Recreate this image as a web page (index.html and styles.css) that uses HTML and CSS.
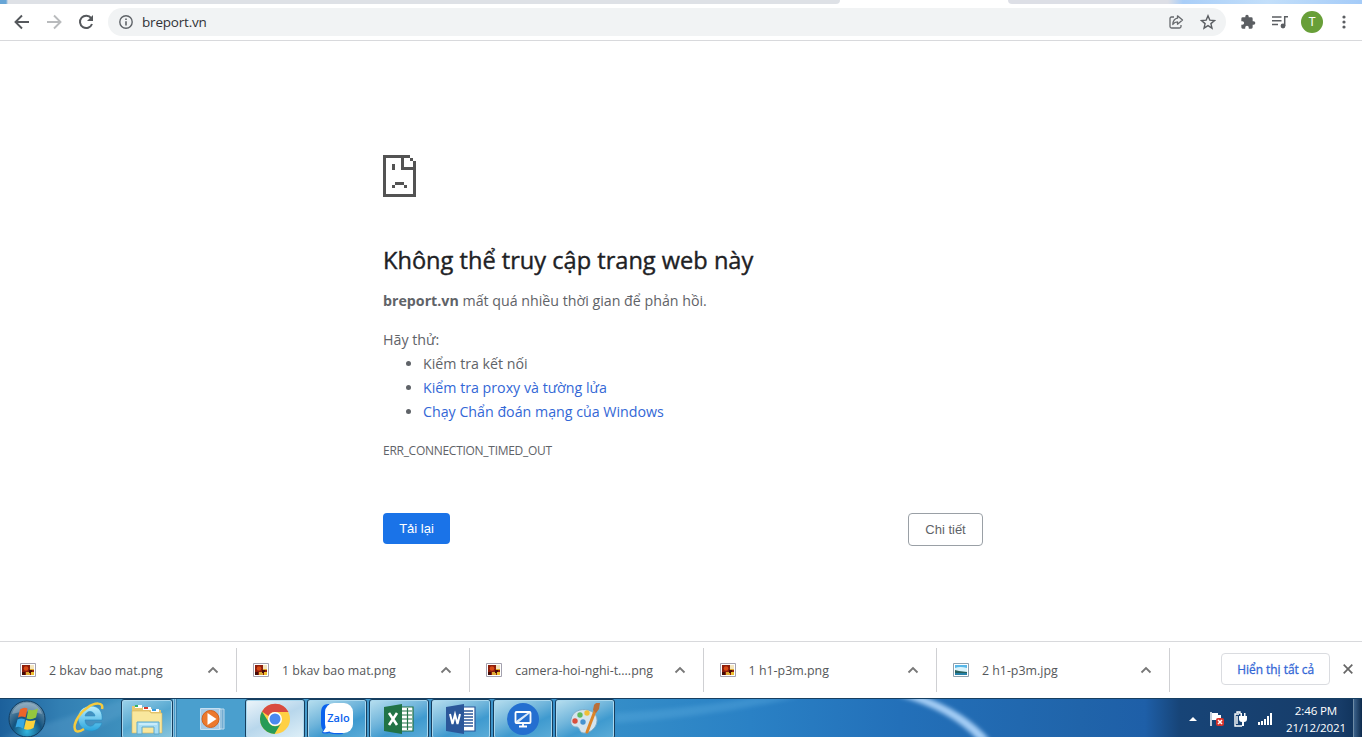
FILE: index.html
```
<!DOCTYPE html>
<html lang="vi">
<head>
<meta charset="utf-8">
<title>breport.vn</title>
<link rel="stylesheet" href="styles.css">
</head>
<body>
<svg class="defs" width="0" height="0">
  <defs>
    <symbol id="png" viewBox="0 0 16 14"><path fill="#fff" stroke="#a3a1ae" d="M.5.5h15v13H.5z"/><path fill="#8d1d0b" d="M2 2h12v10H2z"/><path fill="#dfaa35" d="M10 2h4v5h-4zM6 9h4v3H6z"/><path fill="#f3e4bd" d="M10 2h4v4h-4z"/><circle cx="6" cy="5.500" r="2.300" fill="#d84b16"/><path fill="#430b08" d="M2 9h3v3H2zM9 7h3v3H9z"/><path fill="#efc12f" d="M11 9h3v3h-3z"/></symbol>
    <symbol id="jpg" viewBox="0 0 16 14"><path fill="#fff" stroke="#8fa1ae" d="M.5.5h15v13H.5z"/><path fill="#58b7e8" d="M2 2h12v10H2z"/><path fill="#d9f3fb" d="M2 5q5-2 12 0v4H2z"/><path fill="#28615e" d="M2 7l4 1 8 1v1H2z"/><path fill="#2581a9" d="M2 10h12v2H2z"/></symbol>
    <symbol id="up" viewBox="0 0 12 8"><path fill="none" stroke="#777" stroke-width="1.800" d="M1.500 6.500 6 2l4.500 4.500"/></symbol>
  </defs>
</svg>

<header>
  <div class="tabs"><i class="tab first"></i><i class="tab second"></i></div>
  <div class="toolbar">
    <svg class="nav" viewBox="0 0 16 16"><path fill="none" stroke="#55585c" stroke-width="1.900" d="M15 8H2M8 1.500 1.500 8 8 14.500"/></svg>
    <svg class="nav" viewBox="0 0 16 16"><path fill="none" stroke="#b9bbbd" stroke-width="1.900" d="M1 8h13M8 1.500 14.500 8 8 14.500"/></svg>
    <svg class="nav" viewBox="0 0 16 16"><path fill="none" stroke="#55585c" stroke-width="2" d="M13.200 4.200A6.200 6.200 0 1 0 14 10"/><path fill="#55585c" d="M15 1v6H9z"/></svg>
    <div class="address">
      <svg class="info" viewBox="0 0 14 14"><circle cx="7" cy="7" r="6.200" fill="none" stroke="#5f6368" stroke-width="1.400"/><path fill="#5f6368" d="M6.200 6.200h1.600v4.300H6.200zM6.200 3.500h1.600v1.600H6.200z"/></svg>
      <span class="url">breport.vn</span>
      <svg class="share" viewBox="0 0 16 16"><path fill="none" stroke="#66696d" stroke-width="1.300" stroke-linejoin="round" d="M6 3H3.500Q2 3 2 4.500v8Q2 14 3.500 14h8q1.500 0 1.500-1.500V11M9.500 1.800 14.500 6l-5 4.200V7.800C7.500 7.800 6 8.700 4.800 10.500 5.100 7 6.800 4.500 9.500 4.200z"/></svg>
      <svg class="star" viewBox="0 0 16 16"><path fill="none" stroke="#5b5e62" stroke-width="1.400" d="m8 1.800 1.800 4.300 4.700.4-3.600 3.100 1.100 4.600L8 11.700l-4 2.500 1.100-4.600-3.600-3.100 4.700-.4z"/></svg>
    </div>
    <svg class="ext" viewBox="0 0 24 24"><path fill="#5b5e62" d="M20.500 11H19V7a2 2 0 0 0-2-2h-4V3.500a2.500 2.500 0 0 0-5 0V5H4a2 2 0 0 0-2 2v3.800h1.500a2.700 2.700 0 0 1 0 5.400H2V20a2 2 0 0 0 2 2h3.800v-1.500a2.700 2.700 0 0 1 5.400 0V22H17a2 2 0 0 0 2-2v-4h1.500a2.500 2.500 0 0 0 0-5z"/></svg>
    <svg class="music" viewBox="0 0 16 14"><path fill="none" stroke="#5b5e62" stroke-width="1.500" d="M0 2h9.500M0 5.700h9.500M0 9.400h6M12.700 11V1.800H16"/><circle cx="11" cy="11" r="2.400" fill="#5b5e62"/></svg>
    <span class="avatar">T</span>
    <svg class="dots" viewBox="0 0 4 14"><g fill="#5b5e62"><circle cx="2" cy="2" r="1.600"/><circle cx="2" cy="7" r="1.600"/><circle cx="2" cy="12" r="1.600"/></g></svg>
  </div>
</header>

<main>
  <section class="error">
    <svg class="sad" viewBox="0 0 11 14" shape-rendering="crispEdges"><path fill="#535353" d="M0 0h9v1H7v3h3V2h1v12H0zM1 1v12h9V5H6V1zM9 1h1v1H9zM3 3h1v2H3zM4 9h3v1H4zM3 10h1v1H3zM7 10h1v1H7z" fill-rule="evenodd"/></svg>
    <h1>Không thể truy cập trang web này</h1>
    <p class="lead"><b>breport.vn</b> mất quá nhiều thời gian để phản hồi.</p>
    <p class="try">Hãy thử:</p>
    <ul>
      <li>Kiểm tra kết nối</li>
      <li><a>Kiểm tra proxy và tường lửa</a></li>
      <li><a>Chạy Chẩn đoán mạng của Windows</a></li>
    </ul>
    <p class="code">ERR_CONNECTION_TIMED_OUT</p>
    <div class="actions"><button class="reload">Tải lại</button><button class="details">Chi tiết</button></div>
  </section>
</main>

<section class="downloads">
  <div class="file"><svg class="thumb"><use href="#png"/></svg><span class="name">2 bkav bao mat.png</span><svg class="chev"><use href="#up"/></svg></div>
  <div class="file"><svg class="thumb"><use href="#png"/></svg><span class="name">1 bkav bao mat.png</span><svg class="chev"><use href="#up"/></svg></div>
  <div class="file"><svg class="thumb"><use href="#png"/></svg><span class="name">camera-hoi-nghi-t....png</span><svg class="chev"><use href="#up"/></svg></div>
  <div class="file"><svg class="thumb"><use href="#png"/></svg><span class="name">1 h1-p3m.png</span><svg class="chev"><use href="#up"/></svg></div>
  <div class="file"><svg class="thumb"><use href="#jpg"/></svg><span class="name">2 h1-p3m.jpg</span><svg class="chev"><use href="#up"/></svg></div>
  <button class="all">Hiển thị tất cả</button>
  <svg class="close" viewBox="0 0 10 10"><path stroke="#666" stroke-width="1.700" d="m.7.7 8.600 8.600m0-8.600L.7 9.300"/></svg>
</section>

<footer>
  <svg class="swoosh" viewBox="0 0 1362 39" preserveAspectRatio="none">
    <defs><filter id="soft"><feGaussianBlur stdDeviation="2"/></filter></defs>
    <path d="M0 39 125 0h30L75 39z" fill="#6fb0d8" opacity=".25" filter="url(#soft)"/>
    <path d="M615 24Q710 18 800-2h-45q-60 11-140 16z" fill="#68b5e5" opacity=".3" filter="url(#soft)"/>
    <path d="M898-3q52 14 80 44h12Q965 12 922-3z" fill="#a4cdf5" filter="url(#soft)"/>
  </svg>
  <svg class="start" viewBox="0 0 38 38">
    <defs><radialGradient id="orb" cx=".5" cy=".85" r=".8"><stop offset="0" stop-color="#31b6df"/><stop offset=".5" stop-color="#14537f"/><stop offset="1" stop-color="#6d92ab"/></radialGradient></defs>
    <circle cx="19" cy="19" r="18" fill="url(#orb)" stroke="#123d60"/><path d="M4 14C8-1 30-1 34 14q-15-5-30 0z" fill="#fff" opacity=".25"/>
    <path fill="#ee6429" d="M12 9.500q4-3 7.500-1l-2 9q-4-2-7.500 0z"/><path fill="#94c83e" d="M20.500 9.500q4 2 9.500-1l-2 9q-5 3-9.500 1z"/><path fill="#36a7e4" d="M9.500 19.500q4-2 7.500 0l-2 9q-4-3-7.500-1z"/><path fill="#fbd23b" d="M18 20q4 2 9.500 0l-2 8q-5 3-9.500 1z"/>
  </svg>
  <svg class="ie" viewBox="0 0 32 32"><defs><linearGradient id="eg" x2="0" y2="1"><stop stop-color="#bdefff"/><stop offset="1" stop-color="#27a4dd"/></linearGradient></defs><path fill="url(#eg)" stroke="#278ec4" stroke-width=".6" d="M29 19H12c0 7 8 8 10 3h7c-2 6-7 8-11 8C10 30 5 24 5 17S10 5 18 5s12 6 11 14zM12 15h10c-1-6-9-6-10 0z"/><path fill="none" stroke="#f5cb3f" stroke-width="2.500" d="M29 8C31 1 22 1 14 7 4 14-1 26 3 30c2 1 5 0 8-2"/></svg>
  <div class="task explorer">
    <svg class="ic" viewBox="0 0 32 32"><path fill="#e8c96f" d="M1 3h9l2 2h8l2 2h8v22H1z"/><path fill="#fff" d="M4 2h7v3H4zM12 4h8v3h-8zM20 6h8v3h-8z"/><path fill="#2fb36a" d="M4 2h3v2H4z"/><path fill="#d43b2b" d="M13 4h4v2h-4z"/><path fill="#399bdc" d="M21 6h4v2h-4z"/><path fill="#f9e79d" stroke="#d5b45b" stroke-width=".6" d="M1 8h17l2 2h11v20H1z"/><path fill="#a9def5" stroke="#5da8cb" d="M6 31V19h22v12h-5v-7H11v7z"/><path stroke="#e9faff" d="M8 21h18"/></svg>
  </div>
  <div class="pinned"><svg class="wmp" viewBox="0 0 26 24"><path fill="#74acd1" stroke="#b9d9ec" d="M8 2h16v20H8zM5 2h16v20H5z"/><path fill="#a6cae6" stroke="#c5e0f2" d="M.5 1.500h19v21H.5z"/><circle cx="10.500" cy="12" r="8.500" fill="#ec792d" stroke="#cf6320"/><path fill="#fff" d="m7.500 6 9 6-9 6z"/></svg></div>
  <div class="task active"><svg class="ic" viewBox="0 0 32 32"><circle cx="16" cy="16" r="15" fill="#ffd044"/><path fill="#d94b40" d="M3 8.500A15 15 0 0 1 29.500 9H16a7 7 0 0 0-6.500 4z"/><path fill="#269b57" d="M3 8.500A15 15 0 0 0 15.500 31l6.700-11A7 7 0 0 1 10 19.500z"/><circle cx="16" cy="16" r="7" fill="#fff"/><circle cx="16" cy="16" r="5.500" fill="#4b89ef"/></svg></div>
  <div class="task"><svg class="ic" viewBox="0 0 32 32"><path fill="#0b62ed" d="M8 1C1 1 0 5 0 12v8q0 5 2 7l-1 3q4 1 7 0 5 2 14 1z"/><rect x="4" y="0" width="28" height="30" rx="9" fill="#fff"/><path fill="#fff" d="m5 24-3 5q5 1 8-2z"/><text x="17.500" y="18.500" text-anchor="middle" class="zalo">Zalo</text></svg></div>
  <div class="task"><svg class="ic" viewBox="0 0 32 32"><path fill="#fff" stroke="#237348" stroke-width="1.200" d="M17 4h13v24H17z"/><path stroke="#237348" stroke-width="1.200" d="M18 8h11M18 12h11M18 16h11M18 20h11M18 24h11M24.500 5v22"/><path fill="#217346" d="M1 4 19 1v30L1 28z"/><path fill="none" stroke="#fff" stroke-width="2.600" d="m6 10 8 12m0-12L6 22"/></svg></div>
  <div class="task"><svg class="ic" viewBox="0 0 32 32"><path fill="#fff" stroke="#2b579a" stroke-width="1.200" d="M17 4h13v24H17z"/><path stroke="#2b579a" stroke-width="1.400" d="M18 8h10M18 11h10M18 14h10M18 17h10M18 20h10M18 23h10"/><path fill="#2b579a" d="M1 4 19 1v30L1 28z"/><path fill="none" stroke="#fff" stroke-width="2" d="m5 11 2.500 10L10 11.500 12.500 21 15 11"/></svg></div>
  <div class="task"><svg class="ic" viewBox="0 0 32 32"><circle cx="16" cy="16" r="16" fill="#246fd0"/><rect x="8.500" y="9" width="15" height="11" rx="1" fill="#246fd0" stroke="#fff" stroke-width="1.800"/><path fill="#e4effb" d="M9 19.500V18L21 9.500h2.500V10v9.500z" opacity=".95"/><path fill="#246fd0" d="M22.500 10.500V19H12z"/><path stroke="#fff" stroke-width="1.800" d="M16 20v3.500M12 23.500h8"/></svg></div>
  <div class="task"><svg class="ic" viewBox="0 0 32 32"><path fill="#d5e4ed" stroke="#7babc6" d="M3 13C7 5 19 5 25 10c7 7 1 19-9 20-6 1-5-6-8-6S-1 23 3 13z"/><circle cx="6" cy="18" r="2.700" fill="#da4f3b"/><circle cx="11" cy="12" r="2.700" fill="#5fba60"/><circle cx="18" cy="10" r="2.700" fill="#f1bf38"/><circle cx="14" cy="19" r="2.700" fill="#4692cf"/><path stroke="#db8428" stroke-width="3" stroke-linecap="round" d="m26 8-8 21"/><path fill="#ba6f38" d="m24 7 1-5q2-3 6-2l-1 6-3 4z"/></svg></div>
  <div class="tray">
    <svg class="tri" viewBox="0 0 8 4"><path fill="#fff" d="m4 0 4 4H0z"/></svg>
    <svg class="flag" viewBox="0 0 16 16"><path stroke="#fff" stroke-width="1.500" d="M2 1v14"/><path fill="#fff" d="M3 2h6v2h3v7H8V9H3z"/><rect x="7" y="7" width="8" height="8" rx="2" fill="#d8322b"/><path stroke="#fff" stroke-width="1.500" d="m9 9 4 4m0-4-4 4"/></svg>
    <svg class="power" viewBox="0 0 14 16"><path fill="none" stroke="#fff" stroke-width="1.400" d="M6 3H2v12h7M4 2V1h3v2M4 5v8"/><path fill="#fff" d="M6 5h8v3q0 3-3 3v4H9v-4q-3 0-3-3zM7.500 2H9v3H7.500zM11 2h1.500v3H11z"/></svg>
    <svg class="signal" viewBox="0 0 15 12"><path fill="#fff" d="M0 9h2v3H0zM3 8h2v4H3zM6 6h2v6H6zM9 3h2v9H9zM12 0h2v12h-2z"/></svg>
    <div class="clock"><span>2:46 PM</span><span>21/12/2021</span></div>
    <i class="peek"></i>
  </div>
</footer>
</body>
</html>
```
FILE: styles.css
```
* { box-sizing: border-box; }
body { margin: 0; width: 1362px; height: 737px; overflow: hidden; display: flex; flex-direction: column; background: #fff; font-family: "Open Sans", "Noto Sans", sans-serif; color: #5f6368; }
svg { display: block; flex: none; }
.defs { position: absolute; }
p, h1, ul { margin: 0; white-space: nowrap; }
button { padding: 0; font: inherit; white-space: nowrap; }
header { height: 41px; border-bottom: 1px solid #d8d9dc; flex: none; }
.tabs { height: 4px; display: flex; justify-content: space-between; overflow: hidden; }
.tab { display: block; height: 4px; background: #dee1e6; }
.first { width: 840px; border-radius: 0 0 6px 0; background: linear-gradient(90deg, #67a5d6 6px, #dee1e6 8px); }
.second { width: 354px; border-radius: 0 0 0 6px; background: linear-gradient(90deg, #dddfe6 160px, #a9cef8 175px, #c3dffa 260px, #a4cbf8); }
.toolbar { height: 36px; display: flex; align-items: center; padding-left: 14px; }
.nav { width: 16px; height: 16px; margin-right: 16px; }
.address { width: 1118px; height: 28px; margin-left: -2px; border-radius: 14px; background: #f1f3f4; display: flex; align-items: center; padding: 0 10px 0 11px; }
.info { width: 14px; height: 14px; }
.url { margin-left: 9px; font-size: 13.5px; letter-spacing: -.2px; color: #303236; }
.share { width: 16px; height: 16px; margin-left: auto; }
.star { width: 16px; height: 16px; margin-left: 16px; }
.ext { width: 16px; height: 16px; margin-left: 14px; }
.music { width: 16px; height: 14px; margin-left: 16px; }
.avatar { width: 22px; height: 22px; margin-left: 13px; border-radius: 50%; background: #689f38; color: #fff; font: 12px/22px Roboto, sans-serif; text-align: center; }
.dots { width: 4px; height: 14px; margin-left: 19px; }
main { height: 600px; flex: none; }
.error { width: 600px; margin-left: 383px; padding-top: 114px; font-size: 14.23px; line-height: 24px; }
.sad { width: 33px; height: 42px; }
h1 { margin-top: 48px; font-size: 23.6px; line-height: 30px; font-weight: 400; -webkit-text-stroke: .4px #202124; color: #202124; }
.lead { margin-top: 14px; }
.try { margin-top: 15px; }
ul { padding-left: 40px; }
a { color: #3367d6; }
.code { margin-top: 15px; font-size: 12px; letter-spacing: -.28px; }
.actions { display: flex; justify-content: space-between; align-items: flex-start; margin-top: 50px; font: 13px "Liberation Sans", Arial, sans-serif; }
.reload { width: 67px; height: 31px; border: 0; border-radius: 4px; background: #1a73e8; color: #fff; }
.details { width: 75px; height: 33px; border: 1px solid #9aa0a6; border-radius: 4px; background: #fff; color: #5f6368; }
.downloads { height: 57px; flex: none; border-top: 1px solid #d8d9dc; display: flex; align-items: center; font-size: 12.4px; }
.file { width: 233.3px; height: 44px; border-right: 1px solid #cfd0d3; display: flex; align-items: center; padding: 0 17px 0 16px; }
.file:first-child { width: 237px; padding-left: 20px; }
.thumb { width: 16px; height: 14px; }
.name { margin-left: 13px; color: #55575a; white-space: nowrap; }
.chev { width: 12px; height: 8px; margin-left: auto; }
.all { width: 109px; height: 32px; margin: -2px 0 0 51px; border: 1px solid #dadce0; border-radius: 4px; background: #fff; color: #3367d6; font-size: 11.9px; -webkit-text-stroke: .3px #3367d6; }
.close { width: 10px; height: 10px; margin: -2px 0 0 13px; }
footer { position: relative; height: 39px; flex: none; border-top: 1px solid #173f61; display: flex; background: linear-gradient(90deg, #1c609b, #327fb3 60px, #3d8fbd 120px, #4a9fce 180px, #4a9fce 245px, #348dc8 614px, #2a81c5 750px, #2370b9 900px, #2064aa 1080px, #1e5fa8 1145px, #174477 1180px, #173c68 1340px, #0e3057); overflow: hidden; }
.swoosh { position: absolute; inset: 0; width: 1362px; height: 39px; }
.start, .ie, .task, .pinned, .tray { position: relative; flex: none; }
.start { width: 38px; height: 38px; margin: 1px 0 0 8px; }
.ie { width: 32px; height: 32px; margin: 2px 0 0 27px; }
.task { width: 60px; height: 40px; margin-right: 2px; border: 1px solid #163d5d; border-radius: 3px; box-shadow: inset 0 0 0 1px #a9d8ef; background: linear-gradient(155deg, #b8dfef, #70b5db 42%, #3f9acf 65%, #5dadd8); display: flex; justify-content: center; padding-top: 3px; }
.explorer { width: 52px; margin: 0 0 0 16px; background: linear-gradient(155deg, #9cd2ea, #55a7d0 50%, #8ac6dd); }
.active { background: linear-gradient(155deg, #edf5fa, #b8d7ec 50%, #dff0f8); }
.ic { width: 32px; height: 32px; }
.pinned { width: 72px; height: 38px; border-left: 3px double #8fc2df; box-shadow: inset 4px 0 0 -3px #3680ad; }
.wmp { width: 26px; height: 24px; margin: 8px 0 0 24px; }
.zalo { fill: #0b62ed; font: 600 11px "Open Sans", sans-serif; }
.tray { margin-left: auto; display: flex; align-items: center; height: 40px; color: #fff; }
.tri { width: 8px; height: 4px; }
.flag { width: 16px; height: 16px; margin-left: 12px; }
.power { width: 14px; height: 16px; margin-left: 8px; }
.signal { width: 15px; height: 12px; margin-left: 11px; }
.clock { width: 74px; margin-left: 6px; display: flex; flex-direction: column; align-items: center; font-size: 11.6px; letter-spacing: -.15px; line-height: 17px; }
.peek { width: 9px; height: 40px; border-left: 1px solid #6e8ba5; background: linear-gradient(90deg, #3b618a, #0c294b); }
```
